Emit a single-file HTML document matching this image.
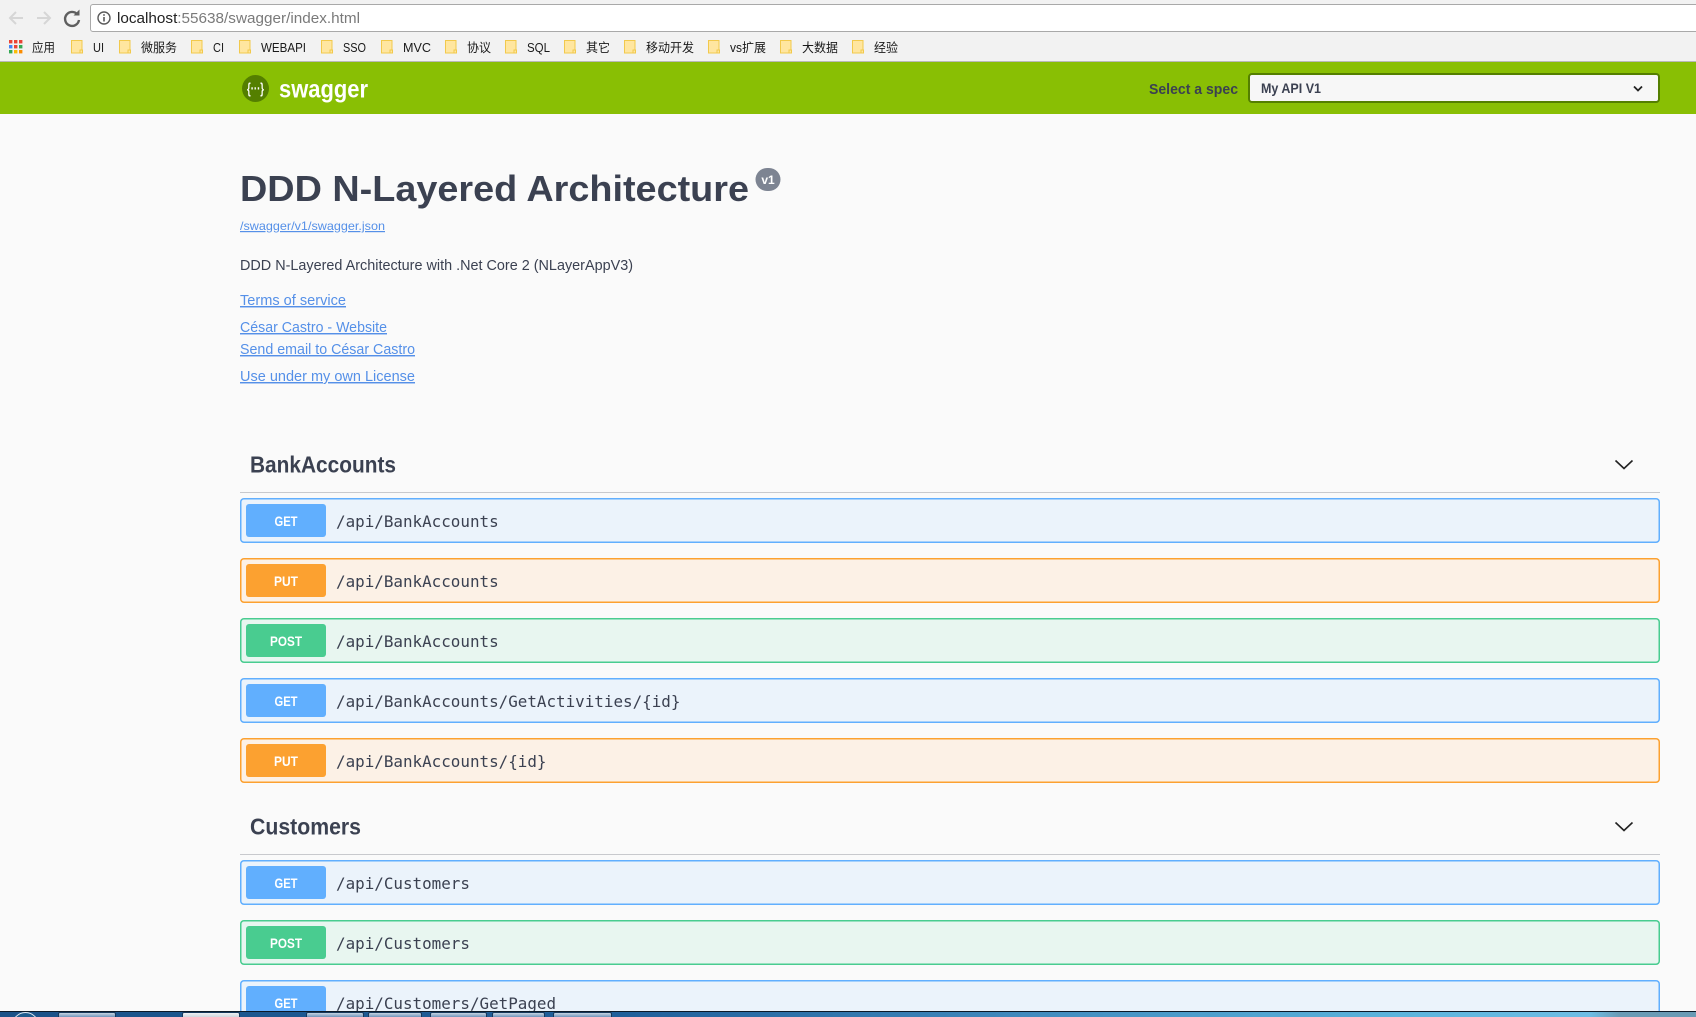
<!DOCTYPE html>
<html lang="en"><head><meta charset="utf-8"><title>Swagger UI</title>
<style>
html,body{margin:0;padding:0;width:1696px;height:1017px;overflow:hidden;background:#fafafa}
#page{position:relative;width:1696px;height:1017px;overflow:hidden;background:#fafafa;font-family:"Liberation Sans","Noto Sans CJK SC",sans-serif}
#page>div,#page>svg{position:absolute}
#chrome{left:0;top:0;width:1696px;height:61px;background:#f2f2f2;border-bottom:1px solid #b9b9b9}
#addr{left:90px;top:4px;width:1620px;height:26px;background:#fff;border:1px solid #a9a9a9;border-radius:3px}
#hdr{left:0;top:62px;width:1696px;height:52px;background:#89bf04}
#sel{left:1248px;top:73px;width:408px;height:26px;background:#f7f7f7;border:2px solid #547f00;border-radius:4px}
.rule{left:240px;width:1420px;height:1px;background:#c8c9cd}
.op{left:240px;width:1420px;height:45px;border-radius:4px;box-sizing:border-box}
.m{left:246px;width:80px;height:33px;border-radius:3px}
.get{background:#ebf3fb;box-shadow:inset 0 0 0 1.5px #61affe}
.put{background:#fcf1e6;box-shadow:inset 0 0 0 1.5px #fca130}
.post{background:#e8f6f0;box-shadow:inset 0 0 0 1.5px #49cc90}
.mget{background:#61affe}.mput{background:#fca130}.mpost{background:#49cc90}
#txt{left:0;top:0}
#task{left:0;top:1011px;width:1696px;height:6px;border-top:1px solid #0c1a28;box-sizing:border-box;overflow:hidden;background:linear-gradient(90deg,#1b5288 0,#205f9a 620px,#3f87bb 1000px,#5cb4dc 1400px,#6fbde4 1590px,#6a9bb5 1620px,#6a9bb5 100%)}
#task i{position:absolute;top:0;height:5px;background:linear-gradient(#c6d4e2,#6f95bb);border:1px solid #16395c;border-bottom:0;border-radius:2px 2px 0 0;box-sizing:border-box}
#task b{position:absolute;left:12px;top:0;width:27px;height:27px;border-radius:50%;background:#1f5d8f;border:1px solid #dfe9f2;box-sizing:border-box}
.mono{font-family:"DejaVu Sans Mono","Liberation Mono",monospace;font-size:15.9px;fill:#3b4151}
.mt{font-weight:bold;font-size:14px;fill:#fff}
.lnk{font-size:14.5px;fill:#5590e8;text-decoration:underline}
.bm{font-size:12.5px;fill:#1a1a1a}
.h{font-weight:bold;font-size:23px;fill:#3b4151}
</style></head><body>
<div id="page">
<div id="chrome"></div>
<div id="addr"></div>
<div id="hdr"></div>
<div id="sel"></div>

<div class="rule" style="top:492px"></div>
<div class="op get" style="top:498px"></div><div class="m mget" style="top:504px"></div>
<div class="op put" style="top:558px"></div><div class="m mput" style="top:564px"></div>
<div class="op post" style="top:618px"></div><div class="m mpost" style="top:624px"></div>
<div class="op get" style="top:678px"></div><div class="m mget" style="top:684px"></div>
<div class="op put" style="top:738px"></div><div class="m mput" style="top:744px"></div>

<div class="rule" style="top:854px"></div>
<div class="op get" style="top:860px"></div><div class="m mget" style="top:866px"></div>
<div class="op post" style="top:920px"></div><div class="m mpost" style="top:926px"></div>
<div class="op get" style="top:980px"></div><div class="m mget" style="top:986px"></div>

<svg id="txt" width="1696" height="1017" viewBox="0 0 1696 1017" xmlns="http://www.w3.org/2000/svg">
<defs>
<g id="fd"><path d="M.5.5H11V13H.5Z" fill="#ffe6a0" stroke="#f2c94c"/><path d="M9 10H11.5V13H9Z" fill="#ffe6a0" stroke="#f2c94c"/></g>
</defs>
<!-- nav -->
<g fill="none" stroke="#d6d6d6" stroke-width="2">
<path d="M23 18H10M16 12L10 18L16 24"/>
<path d="M37 18H50M44 12L50 18L44 24"/>
</g>
<path d="M77.5 14.5A7 7 0 1 0 79 20" fill="none" stroke="#5f5f5f" stroke-width="2.4"/>
<path d="M73.5 15.5H79.5V9.5Z" fill="#5f5f5f"/>
<circle cx="104" cy="18" r="6" fill="none" stroke="#5a5a5a" stroke-width="1.4"/>
<rect x="103.2" y="17" width="1.6" height="4.5" fill="#5a5a5a"/><rect x="103.2" y="14.2" width="1.6" height="1.6" fill="#5a5a5a"/>
<text x="117" y="23" font-size="14.5" textLength="243" lengthAdjust="spacingAndGlyphs" fill="#7a7a7a"><tspan fill="#222">localhost</tspan>:55638/swagger/index.html</text>

<!-- bookmarks -->
<g>
<rect x="9" y="40" width="3.4" height="3.4" fill="#ea4335"/><rect x="14" y="40" width="3.4" height="3.4" fill="#ea4335"/><rect x="19" y="40" width="3.4" height="3.4" fill="#ea4335"/>
<rect x="9" y="45" width="3.4" height="3.4" fill="#4285f4"/><rect x="14" y="45" width="3.4" height="3.4" fill="#ea4335"/><rect x="19" y="45" width="3.4" height="3.4" fill="#34a853"/>
<rect x="9" y="50" width="3.4" height="3.4" fill="#34a853"/><rect x="14" y="50" width="3.4" height="3.4" fill="#fbbc05"/><rect x="19" y="50" width="3.4" height="3.4" fill="#fb8c00"/>
</g>
<use href="#fd" x="71" y="40"/><use href="#fd" x="119" y="40"/><use href="#fd" x="191" y="40"/><use href="#fd" x="239" y="40"/><use href="#fd" x="321" y="40"/><use href="#fd" x="381" y="40"/><use href="#fd" x="445" y="40"/><use href="#fd" x="505" y="40"/><use href="#fd" x="564" y="40"/><use href="#fd" x="624" y="40"/><use href="#fd" x="708" y="40"/><use href="#fd" x="780" y="40"/><use href="#fd" x="852" y="40"/>
<g class="bm">
<text class="bm" x="32" y="52" textLength="23" lengthAdjust="spacingAndGlyphs">应用</text>
<text class="bm" x="93" y="52" textLength="11" lengthAdjust="spacingAndGlyphs">UI</text>
<text class="bm" x="141" y="52" textLength="36" lengthAdjust="spacingAndGlyphs">微服务</text>
<text class="bm" x="213" y="52" textLength="11" lengthAdjust="spacingAndGlyphs">CI</text>
<text class="bm" x="261" y="52" textLength="45" lengthAdjust="spacingAndGlyphs">WEBAPI</text>
<text class="bm" x="343" y="52" textLength="23" lengthAdjust="spacingAndGlyphs">SSO</text>
<text class="bm" x="403" y="52" textLength="28" lengthAdjust="spacingAndGlyphs">MVC</text>
<text class="bm" x="467" y="52" textLength="24" lengthAdjust="spacingAndGlyphs">协议</text>
<text class="bm" x="527" y="52" textLength="23" lengthAdjust="spacingAndGlyphs">SQL</text>
<text class="bm" x="586" y="52" textLength="24" lengthAdjust="spacingAndGlyphs">其它</text>
<text class="bm" x="646" y="52" textLength="48" lengthAdjust="spacingAndGlyphs">移动开发</text>
<text class="bm" x="730" y="52" textLength="36" lengthAdjust="spacingAndGlyphs">vs扩展</text>
<text class="bm" x="802" y="52" textLength="36" lengthAdjust="spacingAndGlyphs">大数据</text>
<text class="bm" x="874" y="52" textLength="24" lengthAdjust="spacingAndGlyphs">经验</text>
</g>

<!-- topbar -->
<circle cx="255.5" cy="88.5" r="13.5" fill="#547f00"/>
<text x="247" y="93.5" font-size="15" font-weight="bold" fill="#fff" textLength="17" lengthAdjust="spacingAndGlyphs">{···}</text>
<text x="279" y="97.5" font-size="25" font-weight="bold" fill="#fff" textLength="89" lengthAdjust="spacingAndGlyphs">swagger</text>
<text x="1149" y="94" font-size="15" font-weight="bold" fill="#3b4151" textLength="89" lengthAdjust="spacingAndGlyphs">Select a spec</text>
<text x="1261" y="93" font-size="14" font-weight="bold" fill="#3b4151" textLength="60" lengthAdjust="spacingAndGlyphs">My API V1</text>
<path d="M1634 86.5L1638 90.5L1642 86.5" fill="none" stroke="#222" stroke-width="1.8"/>

<!-- info -->
<text x="240" y="201" font-size="36" font-weight="bold" fill="#3b4151" textLength="509" lengthAdjust="spacingAndGlyphs">DDD N-Layered Architecture</text>
<rect x="755.5" y="168" width="25" height="23" rx="11.5" fill="#7d8492"/>
<text x="768" y="184" text-anchor="middle" font-size="12" font-weight="bold" fill="#fff">v1</text>
<text class="lnk" style="font-size:12px" x="240" y="230" textLength="145" lengthAdjust="spacingAndGlyphs">/swagger/v1/swagger.json</text>
<text x="240" y="270" font-size="14.5" fill="#3b4151" textLength="393" lengthAdjust="spacingAndGlyphs">DDD N-Layered Architecture with .Net Core 2 (NLayerAppV3)</text>
<text class="lnk" x="240" y="305" textLength="106" lengthAdjust="spacingAndGlyphs">Terms of service</text>
<text class="lnk" x="240" y="332" textLength="147" lengthAdjust="spacingAndGlyphs">César Castro - Website</text>
<text class="lnk" x="240" y="354" textLength="175" lengthAdjust="spacingAndGlyphs">Send email to César Castro</text>
<text class="lnk" x="240" y="381" textLength="175" lengthAdjust="spacingAndGlyphs">Use under my own License</text>

<!-- tags -->
<text class="h" x="250" y="472.5" textLength="146" lengthAdjust="spacingAndGlyphs">BankAccounts</text>
<path d="M1615.5 460.5L1624 468.5L1632.5 460.5" fill="none" stroke="#222" stroke-width="1.6"/>
<text class="h" x="250" y="834.5" textLength="111" lengthAdjust="spacingAndGlyphs">Customers</text>
<path d="M1615.5 822.5L1624 830.5L1632.5 822.5" fill="none" stroke="#222" stroke-width="1.6"/>

<!-- methods -->
<g>
<text class="mt" x="274.5" y="526" textLength="23" lengthAdjust="spacingAndGlyphs">GET</text>
<text class="mt" x="274" y="586" textLength="24" lengthAdjust="spacingAndGlyphs">PUT</text>
<text class="mt" x="270" y="646" textLength="32" lengthAdjust="spacingAndGlyphs">POST</text>
<text class="mt" x="274.5" y="706" textLength="23" lengthAdjust="spacingAndGlyphs">GET</text>
<text class="mt" x="274" y="766" textLength="24" lengthAdjust="spacingAndGlyphs">PUT</text>
<text class="mt" x="274.5" y="888" textLength="23" lengthAdjust="spacingAndGlyphs">GET</text>
<text class="mt" x="270" y="948" textLength="32" lengthAdjust="spacingAndGlyphs">POST</text>
<text class="mt" x="274.5" y="1008" textLength="23" lengthAdjust="spacingAndGlyphs">GET</text>
</g>
<!-- paths -->
<text class="mono" x="336" y="527">/api/BankAccounts</text>
<text class="mono" x="336" y="587">/api/BankAccounts</text>
<text class="mono" x="336" y="647">/api/BankAccounts</text>
<text class="mono" x="336" y="707">/api/BankAccounts/GetActivities/{id}</text>
<text class="mono" x="336" y="767">/api/BankAccounts/{id}</text>
<text class="mono" x="336" y="889">/api/Customers</text>
<text class="mono" x="336" y="949">/api/Customers</text>
<text class="mono" x="336" y="1009">/api/Customers/GetPaged</text>
</svg>

<div id="task">
<b></b>
<i style="left:58px;width:58px"></i>
<i style="left:182px;width:58px;background:linear-gradient(#eef0f3,#cfd6de)"></i>
<i style="left:306px;width:58px"></i>
<i style="left:368px;width:54px"></i>
<i style="left:430px;width:57px"></i>
<i style="left:492px;width:53px"></i>
<i style="left:553px;width:59px"></i>
</div>
</div>
</body></html>
